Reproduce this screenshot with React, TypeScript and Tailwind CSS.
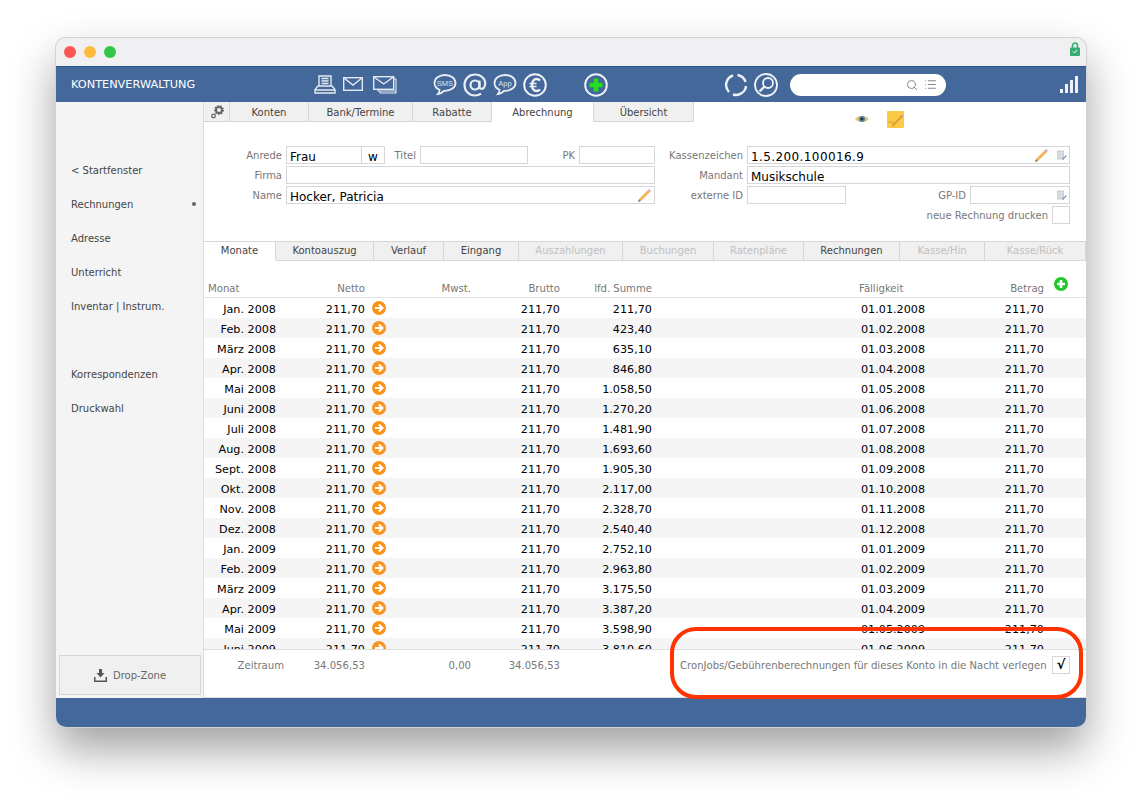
import { List, Search } from "lucide-react";
import type { ReactNode } from "react";

const months = [
  ["Jan. 2008", "211,70", "01.01.2008"],
  ["Feb. 2008", "423,40", "01.02.2008"],
  ["März 2008", "635,10", "01.03.2008"],
  ["Apr. 2008", "846,80", "01.04.2008"],
  ["Mai 2008", "1.058,50", "01.05.2008"],
  ["Juni 2008", "1.270,20", "01.06.2008"],
  ["Juli 2008", "1.481,90", "01.07.2008"],
  ["Aug. 2008", "1.693,60", "01.08.2008"],
  ["Sept. 2008", "1.905,30", "01.09.2008"],
  ["Okt. 2008", "2.117,00", "01.10.2008"],
  ["Nov. 2008", "2.328,70", "01.11.2008"],
  ["Dez. 2008", "2.540,40", "01.12.2008"],
  ["Jan. 2009", "2.752,10", "01.01.2009"],
  ["Feb. 2009", "2.963,80", "01.02.2009"],
  ["März 2009", "3.175,50", "01.03.2009"],
  ["Apr. 2009", "3.387,20", "01.04.2009"],
  ["Mai 2009", "3.598,90", "01.05.2009"],
  ["Juni 2009", "3.810,60", "01.06.2009"],
];

const topTabs = [
  { label: "Konten", w: "w-[79px]" },
  { label: "Bank/Termine", w: "w-[104px]" },
  { label: "Rabatte", w: "w-[79px]" },
  { label: "Abrechnung", w: "w-[102px]", active: true },
  { label: "Übersicht", w: "w-[100px]" },
];

const subTabs = [
  { label: "Monate", w: "w-[72px]", active: true },
  { label: "Kontoauszug", w: "w-[98px]" },
  { label: "Verlauf", w: "w-[70px]" },
  { label: "Eingang", w: "w-[75px]" },
  { label: "Auszahlungen", w: "w-[104px]", off: true },
  { label: "Buchungen", w: "w-[91px]", off: true },
  { label: "Ratenpläne", w: "w-[90px]", off: true },
  { label: "Rechnungen", w: "w-[96px]" },
  { label: "Kasse/Hin", w: "w-[85px]", off: true },
  { label: "Kasse/Rück", w: "w-[101px]", off: true },
];

const sideTop = ["< Startfenster", "Rechnungen", "Adresse", "Unterricht", "Inventar | Instrum."];

function Tab({ label, w, active, off, pad }: { label: string; w: string; active?: boolean; off?: boolean; pad: string }) {
  return (
    <div
      className={`${w} ${pad} flex items-center justify-center border-r border-b text-[10px] ${
        active ? "border-r-[#d6d6d6] border-b-white bg-white" : "border-r-[#d6d6d6] border-b-[#d6d6d6] bg-[#f0f0f0]"
      } ${off ? "text-[#c0c0c0]" : "text-[#444]"}`}
    >
      {label}
    </div>
  );
}

function Label({ w, children }: { w: string; children: ReactNode }) {
  return <div className={`${w} h-[18px] shrink-0 pr-[4px] pt-[1px] text-right text-[10px] leading-[18px] whitespace-nowrap text-[#777]`}>{children}</div>;
}

function Field({ w, children, icons }: { w: string; children?: ReactNode; icons?: ReactNode }) {
  return (
    <div className={`${w} flex h-[18px] shrink-0 items-center justify-between border border-[#d6d6d6] bg-white pl-[3px] text-[12px] text-black`}>
      <span className="pt-[4px] leading-[16px]">{children}</span>
      {icons && <span className="flex items-center gap-[7px] pr-[2px]">{icons}</span>}
    </div>
  );
}

function Pencil() {
  return (
    <svg width="15" height="15" viewBox="0 0 15 15">
      <path d="M2 11 L11 2 L13 4 L4 13 Z" fill="#f2b25a" />
      <path d="M11 2 L12 1 L14 3 L13 4 Z" fill="#c9a0d8" />
      <path d="M2 11 L1 14 L4 13 Z" fill="#8a6a48" />
    </svg>
  );
}

function DocIcon() {
  return (
    <svg width="11" height="11" viewBox="0 0 11 11">
      <rect x="1" y="0.5" width="7" height="9" fill="#cfcfcf" />
      <path d="M2 3h5M2 5h5M2 7h4" stroke="#efefef" strokeWidth="0.8" />
      <path d="M6 9 L10 5 L10.8 6 L7 10 Z" fill="#7d9cbc" />
    </svg>
  );
}

function ArrowDot() {
  return (
    <svg width="14" height="14" viewBox="0 0 14 14" className="-mt-[4px]">
      <circle cx="7" cy="7" r="7" fill="#f7941e" />
      <path d="M3 7h7M7 3.5 10.5 7 7 10.5" fill="none" stroke="#fff" strokeWidth="2" />
    </svg>
  );
}

function Bubble({ text }: { text: string }) {
  return (
    <svg width="24" height="24" viewBox="0 0 24 24" fill="none">
      <path
        d="M12 2C6 2 1.500 5.500 1.500 10c0 3 2 5.500 5 6.800 0 1.500-.5 3-1.500 4.200 2.500-.3 4.500-1.500 6-3.200h1c6 0 10.500-3.300 10.500-7.800S18 2 12 2Z"
        stroke="#e9eef5"
        strokeWidth="1.800"
      />
      <text x="12" y="12.500" textAnchor="middle" fontSize="7.500" fill="#dfe6f0" fontFamily="Liberation Sans, sans-serif">
        {text}
      </text>
    </svg>
  );
}

function HeaderIcons() {
  return (
    <div className="flex items-center">
      <svg width="22" height="20" viewBox="0 0 22 20" fill="none" stroke="#e4eaf3" strokeWidth="1.400" className="ml-[118px]">
        <path d="M5 11V1h12v10M7.500 3.500h7M7.500 6h7M7.500 8.500h7" />
        <path d="M4 11h14l3 3.500v3.500H1v-3.500Z" fill="#44689a" />
        <path d="M1 15h20" />
      </svg>
      <svg width="20" height="14" viewBox="0 0 20 14" fill="none" stroke="#e4eaf3" strokeWidth="1.400" className="ml-[7px] -translate-y-[1px]">
        <rect x="0.700" y="0.700" width="18.600" height="12.600" />
        <path d="m1 1 9 7 9-7" />
      </svg>
      <svg width="24" height="18" viewBox="0 0 24 18" fill="none" stroke="#e4eaf3" strokeWidth="1.400" className="ml-[10px]">
        <path d="M21 3h2v12H5v-1.500M23 15v2H7v-2" strokeWidth="1.100" />
        <rect x="0.700" y="0.700" width="20" height="12.600" fill="#44689a" />
        <path d="m1 1 9.700 7 9.700-7" />
      </svg>
      <div className="ml-[36px]"><Bubble text="SMS" /></div>
      <svg width="24" height="24" viewBox="0 0 24 24" fill="none" stroke="#e9eef5" strokeWidth="2.200" className="ml-[6px]">
        <circle cx="12" cy="12" r="4.500" />
        <path d="M16.500 7.500v6.500c0 2 3 2.500 4.500 .5 1-1.500 1.500-3 1.200-5C21.500 4.500 17 1.500 12 1.500 6 1.500 1.500 6 1.500 12S6 22.500 12 22.500c2.500 0 4.500-.7 6-1.800" />
      </svg>
      <div className="ml-[6px]"><Bubble text="App" /></div>
      <svg width="24" height="24" viewBox="0 0 24 24" fill="none" stroke="#eef2f7" className="ml-[6px]">
        <circle cx="12" cy="12" r="10.800" strokeWidth="2" />
        <path d="M17 7.500c-1-1-2-1.500-3.300-1.500-3 0-4.700 2.700-4.700 6s1.700 6 4.700 6c1.300 0 2.300-.5 3.300-1.500" strokeWidth="2.400" />
        <path d="M6.500 10.500h7M6.500 13.500h7" strokeWidth="1.600" />
      </svg>
      <svg width="24" height="24" viewBox="0 0 24 24" className="ml-[37px]">
        <circle cx="12" cy="12" r="10.800" fill="#44689a" stroke="#eef2f7" strokeWidth="2" />
        <path d="M12 5.500v13M5.500 12h13" stroke="#22e01c" strokeWidth="4.600" />
      </svg>
      <svg width="24" height="24" viewBox="0 0 24 24" fill="none" stroke="#eef2f7" strokeWidth="2.400" className="ml-[116px]">
        <path d="M5 19A10 10 0 0 1 9 2.500" />
        <path d="M13.500 2A10 10 0 0 1 21.500 9" />
        <path d="M22 13A10 10 0 0 1 9 21.500" />
      </svg>
      <svg width="24" height="24" viewBox="0 0 24 24" fill="none" stroke="#eef2f7" className="ml-[6px]">
        <circle cx="12" cy="12" r="11" strokeWidth="1.800" />
        <circle cx="14" cy="10" r="5" strokeWidth="1.800" />
        <path d="m10.500 13.500-5 5" strokeWidth="2.400" />
      </svg>
      <div className="ml-[12px] flex h-[22px] w-[156px] items-center justify-end gap-[6px] rounded-full bg-white pr-[9px] text-[#888]">
        <Search size={12} />
        <List size={13} />
      </div>
    </div>
  );
}

function Row({ m, sum, date, odd }: { m: string; sum: string; date: string; odd: boolean }) {
  return (
    <div className={`flex h-[20px] shrink-0 items-center pt-[4px] text-[11.200px] leading-[16px] text-black ${odd ? "bg-[#f5f5f5]" : "bg-white"}`}>
      <div className="w-[72px] text-right">{m}</div>
      <div className="w-[89px] text-right">211,70</div>
      <div className="flex w-[106px] pl-[7px]"><ArrowDot /></div>
      <div className="w-[89px] text-right">211,70</div>
      <div className="w-[92px] text-right">{sum}</div>
      <div className="ml-[209px] w-[64px] whitespace-nowrap">{date}</div>
      <div className="w-[119px] text-right">211,70</div>
    </div>
  );
}

export default function App() {
  return (
    <div className="relative h-[801px] w-[1142px] overflow-hidden bg-white pl-[56px] pt-[38px] font-['DejaVu_Sans',sans-serif]">
      <div className="flex h-[689px] w-[1030px] flex-col overflow-hidden rounded-[10px] shadow-[0_0_0_1px_#d2d2d2,0_22px_45px_rgba(0,0,0,0.38)]">
        {/* title bar */}
        <div className="flex h-[28px] shrink-0 items-center gap-[8px] bg-[#f0f0f2] pl-[8px] pr-[6px]">
          <span className="h-[12px] w-[12px] rounded-full bg-[#fc5753]" />
          <span className="h-[12px] w-[12px] rounded-full bg-[#fdbc40]" />
          <span className="h-[12px] w-[12px] rounded-full bg-[#33c748]" />
          <svg width="10" height="14" viewBox="0 0 10 14" className="mb-[7px] ml-auto">
            <path d="M2.500 6V3.500a2.500 2.500 0 0 1 5 0V6" fill="none" stroke="#35ad6e" strokeWidth="1.500" />
            <rect y="5.500" width="10" height="8.500" rx="1" fill="#35ad6e" />
            <path d="m3 9.500 1.500 1.500 2.500-3" fill="none" stroke="#fff" />
          </svg>
        </div>

        {/* blue header */}
        <div className="flex h-[36px] shrink-0 items-center border-t border-[#24518c] bg-[#44689a] pl-[15px]">
          <div className="w-[125px] pt-[2px] text-[11.300px] whitespace-nowrap text-white">KONTENVERWALTUNG</div>
          <HeaderIcons />
          <div className="ml-[114px] flex h-[17px] items-end gap-[2px]">
            <span className="h-[4px] w-[3px] bg-[#eef2f7]" />
            <span className="h-[9px] w-[3px] bg-[#eef2f7]" />
            <span className="h-[13px] w-[3px] bg-[#eef2f7]" />
            <span className="h-[17px] w-[3px] bg-[#eef2f7]" />
          </div>
        </div>

        <div className="flex min-h-0 flex-1">
          {/* sidebar */}
          <aside className="flex w-[148px] shrink-0 flex-col border-r border-[#dcdcdc] bg-[#f4f4f4] pb-[3px] pl-[3px]">
            <div className="flex flex-1 flex-col pl-[12px] pt-[51px] text-[10px] text-[#444]">
              {sideTop.map((s, i) => (
                <div key={s} className="flex h-[34px] items-center justify-between pr-[7px]">
                  {s}
                  {i === 1 && <span className="h-[4px] w-[4px] rounded-full bg-[#666]" />}
                </div>
              ))}
              <div className="mt-[34px] flex h-[34px] items-center">Korrespondenzen</div>
              <div className="flex h-[34px] items-center">Druckwahl</div>
            </div>
            <div className="flex h-[40px] w-[142px] items-center justify-center gap-[6px] border border-[#d6d6d6] bg-[#f0f0f0] text-[10px] text-[#666]">
              <svg width="13" height="13" viewBox="0 0 13 13" fill="#555">
                <path d="M5 0h3v4h2.500L6.500 8.500 2.500 4H5Z" />
                <path d="M0 8h1.500v3.500h10V8H13v5H0Z" />
              </svg>
              <span className="pt-[1px]">Drop-Zone</span>
            </div>
          </aside>

          <main className="flex min-w-0 flex-1 flex-col bg-white">
            {/* top tabs */}
            <div className="flex h-[20px] shrink-0 items-start">
              <div className="flex h-full w-[26px] items-center justify-center border-r border-b border-[#d6d6d6] bg-[#f0f0f0]">
                <svg width="14" height="14" viewBox="0 0 14 14" fill="none" stroke="#666">
                  <circle cx="9" cy="5" r="3" strokeWidth="2" />
                  <circle cx="9" cy="5" r="4.300" strokeWidth="1.400" strokeDasharray="1.500 1.500" />
                  <circle cx="3.500" cy="11" r="1.800" strokeWidth="1.300" />
                </svg>
              </div>
              {topTabs.map((t) => (
                <div key={t.label} className="flex h-full">
                  <Tab {...t} pad="pt-[2px]" />
                </div>
              ))}
              <svg width="14" height="10" viewBox="0 0 14 10" className="ml-[161px] mt-[12px] shrink-0">
                <path d="M0 5C3 1 11 1 14 5 11 9 3 9 0 5Z" fill="#e8c078" />
                <circle cx="7" cy="5" r="3" fill="#4f8296" />
                <circle cx="7" cy="5" r="1.300" fill="#20303a" />
              </svg>
              <svg width="17" height="17" viewBox="0 0 17 17" className="ml-[18px] mt-[9px] shrink-0">
                <rect width="17" height="17" rx="1" fill="#fbcb45" />
                <path d="M6 13 14 4.500 15.500 6 7.500 14.500 5.500 15Z" fill="#e89a3c" />
                <path d="M14 4.500 15 3.500 16.500 5 15.500 6Z" fill="#b48ad0" />
                <path d="M0.500 11H6V16.500" fill="none" stroke="#d9a52f" />
              </svg>
            </div>

            {/* form */}
            <div className="flex h-[119px] shrink-0 flex-col gap-[2px] pt-[24px]">
              <div className="flex">
                <div className="flex w-[451px] shrink-0">
                  <Label w="w-[82px]">Anrede</Label>
                  <div className="flex h-[18px] w-[99px] shrink-0 border border-[#d6d6d6] text-[12px] text-black">
                    <div className="w-[75px] border-r border-[#d6d6d6] pl-[3px] pt-[2px] leading-[16px]">Frau</div>
                    <div className="flex-1 pt-[2px] text-center leading-[16px]">w</div>
                  </div>
                  <Label w="w-[35px]">Titel</Label>
                  <Field w="w-[108px]" />
                  <Label w="w-[51px]">PK</Label>
                  <Field w="w-[76px]" />
                </div>
                <Label w="w-[92px]">Kassenzeichen</Label>
                <Field w="w-[323px]" icons={<><Pencil /><DocIcon /></>}>
                  <span className="tracking-[0.4px]">1.5.200.100016.9</span>
                </Field>
              </div>
              <div className="flex">
                <div className="flex w-[451px] shrink-0">
                  <Label w="w-[82px]">Firma</Label>
                  <Field w="w-[369px]" />
                </div>
                <Label w="w-[92px]">Mandant</Label>
                <Field w="w-[323px]">Musikschule</Field>
              </div>
              <div className="flex">
                <div className="flex w-[451px] shrink-0">
                  <Label w="w-[82px]">Name</Label>
                  <Field w="w-[369px]" icons={<Pencil />}>Hocker, Patricia</Field>
                </div>
                <Label w="w-[92px]">externe ID</Label>
                <Field w="w-[99px]" />
                <Label w="w-[124px]">GP-ID</Label>
                <Field w="w-[100px]" icons={<DocIcon />} />
              </div>
              <div className="flex justify-end pr-[16px]">
                <Label w="w-[160px]">neue Rechnung drucken</Label>
                <Field w="w-[18px]" />
              </div>
            </div>

            {/* sub tabs */}
            <div className="flex h-[20px] shrink-0 border-t border-[#d6d6d6]">
              {subTabs.map((t) => (
                <Tab key={t.label} {...t} pad="pb-[2px]" />
              ))}
            </div>

            {/* table head */}
            <div className="flex h-[37px] shrink-0 items-end border-b border-[#e4e4e4] pb-[1px] text-[10.100px] text-[#777]">
              <div className="w-[72px] pl-[4px]">Monat</div>
              <div className="w-[89px] text-right">Netto</div>
              <div className="w-[106px] text-right">Mwst.</div>
              <div className="w-[89px] text-right">Brutto</div>
              <div className="w-[92px] text-right">lfd. Summe</div>
              <div className="ml-[207px] w-[66px]">Fälligkeit</div>
              <div className="w-[119px] text-right">Betrag</div>
              <svg width="14" height="14" viewBox="0 0 14 14" className="mb-[5px] ml-[10px]">
                <circle cx="7" cy="7" r="7" fill="#22c52a" />
                <path d="M7 3v8M3 7h8" stroke="#fff" strokeWidth="2.600" />
              </svg>
            </div>

            {/* rows */}
            <div className="flex min-h-0 flex-1 flex-col overflow-hidden">
              {months.map(([m, sum, date], i) => (
                <Row key={m} m={m} sum={sum} date={date} odd={i % 2 === 1} />
              ))}
            </div>

            {/* summary */}
            <div className="flex h-[49px] shrink-0 border-t border-b border-[#dcdcdc] pt-[8px] text-[10.100px] leading-[16px] text-[#777]">
              <div className="w-[80px] text-right">Zeitraum</div>
              <div className="w-[81px] text-right">34.056,53</div>
              <div className="w-[106px] text-right">0,00</div>
              <div className="w-[89px] text-right">34.056,53</div>
              <div className="ml-[120px] w-[367px] whitespace-nowrap">CronJobs/Gebührenberechnungen für dieses Konto in die Nacht verlegen</div>
              <div className="-mt-[2px] ml-[5px] flex h-[18px] w-[18px] items-center justify-center border border-[#d6d6d6] text-[13px] font-bold text-black">√</div>
            </div>
          </main>
        </div>

        <div className="h-[29px] shrink-0 bg-[#44689a]" />
      </div>

      {/* red annotation */}
      <div className="absolute left-[670px] top-[627px] h-[72px] w-[413px] rounded-[26px] border-[4px] border-[#ff3300]" />
    </div>
  );
}
